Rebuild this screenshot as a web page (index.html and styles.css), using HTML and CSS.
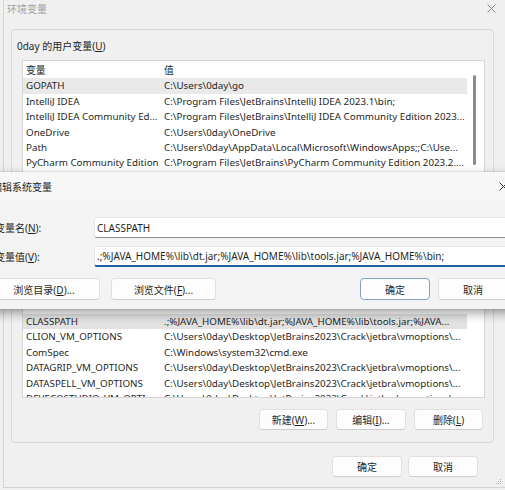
FILE: index.html
```html
<!DOCTYPE html>
<html lang="zh-CN">
<head>
<meta charset="utf-8">
<title>环境变量</title>
<link rel="stylesheet" href="styles.css">
</head>
<body>
<div class="win">
  <div class="win-title">
    <span class="win-title-text">环境变量</span>
    <svg class="win-close" width="9" height="9" viewBox="0 0 9 9"><path d="M0.5 0.5L8.5 8.5M8.5 0.5L0.5 8.5" stroke="#8c8c8c" stroke-width="1" fill="none"/></svg>
  </div>
  <div class="win-body">
    <div class="group group-user">
      <div class="group-label">0day 的用户变量(<u>U</u>)</div>
      <div class="list list-user">
        <div class="rows">
          <div class="row"><span class="c1">变量</span><span class="c2">值</span></div>
          <div class="row sel"><span class="c1">GOPATH</span><span class="c2">C:\Users\0day\go</span></div>
          <div class="row"><span class="c1">IntelliJ IDEA</span><span class="c2">C:\Program Files\JetBrains\IntelliJ IDEA 2023.1\bin;</span></div>
          <div class="row"><span class="c1">IntelliJ IDEA Community Ed...</span><span class="c2">C:\Program Files\JetBrains\IntelliJ IDEA Community Edition 2023...</span></div>
          <div class="row"><span class="c1">OneDrive</span><span class="c2">C:\Users\0day\OneDrive</span></div>
          <div class="row"><span class="c1">Path</span><span class="c2">C:\Users\0day\AppData\Local\Microsoft\WindowsApps;;C:\Use...</span></div>
          <div class="row"><span class="c1">PyCharm Community Edition</span><span class="c2">C:\Program Files\JetBrains\PyCharm Community Edition 2023.2....</span></div>
        </div>
        <div class="track"><div class="thumb"></div></div>
      </div>
    </div>
    <div class="group group-sys">
      <div class="list list-sys">
        <div class="rows">
          <div class="row sel-sys"><span class="c1">CLASSPATH</span><span class="c2">.;%JAVA_HOME%\lib\dt.jar;%JAVA_HOME%\lib\tools.jar;%JAVA...</span></div>
          <div class="row"><span class="c1">CLION_VM_OPTIONS</span><span class="c2">C:\Users\0day\Desktop\JetBrains2023\Crack\jetbra\vmoptions\...</span></div>
          <div class="row"><span class="c1">ComSpec</span><span class="c2">C:\Windows\system32\cmd.exe</span></div>
          <div class="row"><span class="c1">DATAGRIP_VM_OPTIONS</span><span class="c2">C:\Users\0day\Desktop\JetBrains2023\Crack\jetbra\vmoptions\...</span></div>
          <div class="row"><span class="c1">DATASPELL_VM_OPTIONS</span><span class="c2">C:\Users\0day\Desktop\JetBrains2023\Crack\jetbra\vmoptions\...</span></div>
          <div class="row"><span class="c1">DEVECOSTUDIO_VM_OPTI...</span><span class="c2">C:\Users\0day\Desktop\JetBrains2023\Crack\jetbra\vmoptions\...</span></div>
        </div>
        <div class="track"></div>
      </div>
      <div class="group-btns">
        <button class="btn w69">新建(<u>W</u>)...</button>
        <button class="btn w70">编辑(<u>I</u>)...</button>
        <button class="btn w69">删除(<u>L</u>)</button>
      </div>
    </div>
    <div class="footer">
      <button class="btn w70">确定</button>
      <button class="btn w70">取消</button>
      <svg class="grip" width="7" height="7" viewBox="0 0 7 7"><g fill="#a8a8a8"><rect x="5" y="1" width="1" height="1"/><rect x="3" y="3" width="1" height="1"/><rect x="5" y="3" width="1" height="1"/><rect x="1" y="5" width="1" height="1"/><rect x="3" y="5" width="1" height="1"/><rect x="5" y="5" width="1" height="1"/></g></svg>
    </div>
  </div>
</div>

<div class="dlg">
  <div class="dlg-title">
    <span>编辑系统变量</span>
    <svg class="dlg-close" width="9" height="9" viewBox="0 0 9 9"><path d="M0.5 0.5L8.5 8.5M8.5 0.5L0.5 8.5" stroke="#333" stroke-width="1" fill="none"/></svg>
  </div>
  <div class="form">
    <label class="flabel">变量名(<u>N</u>):</label>
    <div class="input">CLASSPATH</div>
    <label class="flabel">变量值(<u>V</u>):</label>
    <div class="input focus">.;%JAVA_HOME%\lib\dt.jar;%JAVA_HOME%\lib\tools.jar;%JAVA_HOME%\bin;</div>
  </div>
  <div class="dlg-btns">
    <button class="btn browse-dir">浏览目录(<u>D</u>)...</button>
    <button class="btn browse-file">浏览文件(<u>F</u>)...</button>
    <button class="btn w70 primary">确定</button>
    <button class="btn w70">取消</button>
  </div>
</div>
</body>
</html>
```
FILE: styles.css
```css
* { box-sizing: border-box; }
html, body { margin: 0; padding: 0; overflow: hidden; }
body {
  width: 505px;
  height: 490px;
  position: relative;
  background: #f0f0f0;
  font-family: "Noto Sans", "Noto Sans CJK SC", sans-serif;
  font-size: 10px;
  color: #1f1f1f;
}
u { text-decoration: underline; text-underline-offset: 1px; }

.win {
  margin-left: 3px;
  width: 502px;
  height: 488px;
  border-left: 1px solid #d4d4d4;
  border-bottom: 1px solid #d4d4d4;
  background: #f0f0f0;
  display: flex;
  flex-direction: column;
}
.win-title {
  height: 16px;
  display: flex;
  align-items: center;
  justify-content: space-between;
  padding: 0 9px 0 3px;
  color: #a3a3a3;
}
.win-body {
  padding: 13px 0 0 7px;
  display: flex;
  flex-direction: column;
}
.group {
  width: 483px;
  border: 1px solid #d9d9d9;
  border-radius: 4px;
  padding: 0 8px 0 10px;
}
.group-user {
  height: 222px;
  padding-top: 9px;
}
.group-label {
  height: 14px;
  line-height: 14px;
  margin-left: -5px;
  margin-bottom: 7px;
}
.group-sys {
  margin-top: 3px;
  padding-top: 41px;
  padding-bottom: 12px;
}
.list {
  background: #fff;
  border: 1px solid #d6d6d6;
  display: flex;
  overflow: hidden;
}
.list-user { height: 170px; }
.list-sys { height: 102px; }
.rows {
  flex: 1;
  min-width: 0;
  padding-top: 2px;
  font-size: 9.8px;
}
.list-sys .rows { padding-top: 17px; }
.track { width: 17px; flex: none; }
.thumb {
  margin: 14px 0 0 6px;
  width: 3px;
  height: 90px;
  border-radius: 2px;
  background: #8b8b8b;
}
.row {
  height: 15.4px;
  line-height: 15.4px;
  display: flex;
  padding-left: 3px;
  white-space: nowrap;
}
.row.sel { background: #e9e9e9; }
.row.sel-sys { background: #e2e2e2; }
.c1 { width: 138px; flex: none; overflow: hidden; }
.c2 { flex: 1; min-width: 0; overflow: hidden; }

.btn {
  flex: none;
  height: 21px;
  padding: 0;
  border: 1px solid #e0e0e0;
  border-bottom-color: #cdcdcd;
  border-radius: 4px;
  background: #fdfdfd;
  font-family: inherit;
  font-size: 10px;
  color: #1f1f1f;
  text-align: center;
}
.w69 { width: 69px; }
.w70 { width: 70px; }

.group-btns {
  margin-top: 11px;
  margin-right: 2px;
  display: flex;
  justify-content: flex-end;
  gap: 8px;
}
.footer {
  margin-top: 13px;
  padding-right: 3px;
  display: flex;
  justify-content: flex-end;
  gap: 6px;
}
.grip {
  flex: none;
  align-self: flex-end;
  margin: 0 0 -8px 11px;
}

.dlg {
  position: absolute;
  left: -22px;
  top: 172px;
  width: 545px;
  height: 137px;
  background: #f3f3f3;
  box-shadow: 0 4px 10px rgba(0, 0, 0, 0.38), 0 0 0 1px rgba(0, 0, 0, 0.06);
  display: flex;
  flex-direction: column;
}
.dlg-title {
  height: 28px;
  flex: none;
  display: flex;
  align-items: center;
  justify-content: space-between;
  padding: 0 15px 0 14px;
  background: #f7f7f7;
}
.form {
  margin-top: 17px;
  padding-left: 17px;
  display: grid;
  grid-template-columns: 99px 1fr;
  row-gap: 8px;
  align-items: center;
}
.flabel { line-height: 14px; }
.input {
  height: 21px;
  line-height: 20px;
  padding-left: 2px;
  margin-right: 8px;
  background: #fff;
  border: 1px solid #e6e6e6;
  border-bottom-color: #8c8c8c;
  border-radius: 3px;
  white-space: nowrap;
}
.input.focus {
  border-bottom: 2px solid #1d5f9c;
  line-height: 19px;
}
.dlg-btns {
  margin-top: 11px;
  padding: 0 15px 0 10px;
  display: flex;
  gap: 8px;
}
.dlg-btns .btn { height: 22px; }
.browse-dir { width: 112px; }
.browse-file { width: 105px; margin-left: 3px; margin-right: auto; }
.primary { border-color: #7fa3c6; }
```
